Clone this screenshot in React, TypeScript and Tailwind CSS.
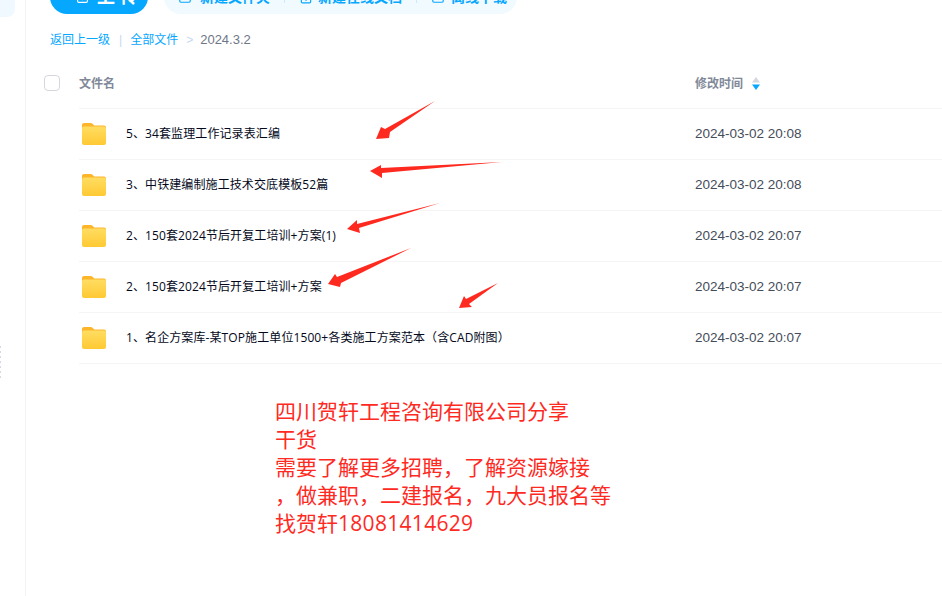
import { SquareArrowUp, SquarePlus, FilePlus, SquareArrowDown } from "lucide-react";

const files = [
  { name: "5、34套监理工作记录表汇编", time: "2024-03-02 20:08" },
  { name: "3、中铁建编制施工技术交底模板52篇", time: "2024-03-02 20:08" },
  { name: "2、150套2024节后开复工培训+方案(1)", time: "2024-03-02 20:07" },
  { name: "2、150套2024节后开复工培训+方案", time: "2024-03-02 20:07" },
  { name: "1、名企方案库-某TOP施工单位1500+各类施工方案范本（含CAD附图）", time: "2024-03-02 20:07" },
];

const arrows = [
  "435,101 390,132 389,138 376,139 381,127 385,129",
  "502,162 382,173 382,178 370,171 381,165 381,168",
  "440,203 359,228 360,233 347,229 357,220 357,224",
  "411,248 341,283 340,287 328,284 335,274 337,277",
  "498,283 469,304 472,307 459,308 464,296 466,299",
];

function FolderIcon() {
  return (
    <svg width="24" height="22" viewBox="0 0 24 22" className="shrink-0">
      <defs>
        <linearGradient id="folderBody" x1="0" y1="0" x2="0" y2="1">
          <stop offset="0" stopColor="#ffdd62" />
          <stop offset="1" stopColor="#ffc933" />
        </linearGradient>
      </defs>
      <path d="M2 0h6.500c1 0 1.600.4 2.200 1l1.500 1.500H22c1.100 0 2 .9 2 2V8H0V2C0 .9.900 0 2 0z" fill="#fdb52a" />
      <rect x="0" y="3.500" width="24" height="18.500" rx="2" fill="url(#folderBody)" />
    </svg>
  );
}

export default function App() {
  return (
    <div className="relative h-[596px] w-[942px] overflow-hidden bg-white font-['Liberation_Sans','Noto_Sans_CJK_SC',sans-serif]">
      <div className="flex h-full">
        {/* Sidebar */}
        <div className="flex w-[26px] shrink-0 flex-col justify-between border-r border-[#f2f3f5]">
          <div className="h-[17px] w-[15px] rounded-br-lg bg-[#f0f9ff]" />
        </div>
        <div className="absolute left-0 top-[346px] flex flex-col gap-[3px]">
          {[0, 1, 2, 3, 4, 5, 6].map((i) => (
            <div key={i} className="h-[2px] w-[1px] bg-[#d6d9e4]" />
          ))}
        </div>

        {/* Main */}
        <div className="min-w-0 flex-1">
          {/* Toolbar, scrolled partly out of view */}
          <div className="ml-6 -mt-5 flex items-center gap-4">
            <button className="flex h-[34px] w-[98px] items-center rounded-full bg-[#06a7ff] pl-[26px] text-[18px] font-bold tracking-[5px] text-white">
              <SquareArrowUp className="h-[13px] w-[13px]" />
              <span className="ml-[8px]">上传</span>
            </button>
            <div className="flex h-[34px] w-[353px] items-center rounded-[20px] bg-[#f0faff] pl-[14px] text-sm font-bold text-[#06a7ff]">
              <SquarePlus className="h-[14px] w-[14px]" />
              <span className="ml-2">新建文件夹</span>
              <div className="mx-[14px] h-3 w-px bg-[#cfe9fb]" />
              <FilePlus className="h-[14px] w-[14px]" />
              <span className="ml-[5px]">新建在线文档</span>
              <div className="mx-[14px] h-3 w-px bg-[#cfe9fb]" />
              <SquareArrowDown className="h-[14px] w-[14px]" />
              <span className="ml-[6px]">离线下载</span>
            </div>
          </div>

          {/* Breadcrumb */}
          <div className="ml-6 mt-[18px] flex h-4 items-center text-xs text-[#06a7ff]">
            <span>返回上一级</span>
            <span className="ml-[9px] mr-2 text-[#c4d8f4]">|</span>
            <span>全部文件</span>
            <span className="ml-2 mr-[7px] text-[#c4d8f4]">&gt;</span>
            <span className="text-[13px] text-[#6f7787]">2024.3.2</span>
          </div>

          {/* Table header */}
          <div className="ml-[18px] mt-[10px] flex h-[50px] items-center">
            <div className="h-4 w-4 rounded-[4px] border border-[#d4d7de]" />
            <div className="ml-[19px] mt-px w-[616px] text-xs font-bold text-[#818999]">文件名</div>
            <div className="mt-px flex items-center text-xs font-bold text-[#818999]">
              修改时间
              <svg width="8" height="13" viewBox="0 0 8 13" className="ml-[9px]">
                <path d="M4 0L8 5.500H0z" fill="#d4d7de" />
                <path d="M4 13L0 7.500h8z" fill="#06a7ff" />
              </svg>
            </div>
          </div>

          {/* Rows */}
          <div className="ml-[53px]">
            {files.map((f) => (
              <div key={f.name} className="flex h-[51px] items-center border-t border-[#f5f5f6] text-xs">
                <div className="ml-[3px]">
                  <FolderIcon />
                </div>
                <div className="ml-5 w-[569px] font-['Open_Sans','Noto_Sans_CJK_SC',sans-serif] tracking-[0.1px] text-[#03081a]">
                  {f.name}
                </div>
                <div className="text-[13.500px] text-[#454d5a]">{f.time}</div>
              </div>
            ))}
            <div className="border-t border-[#f5f5f6]" />
          </div>
        </div>
      </div>

      {/* Red annotations drawn over the screenshot */}
      <svg width="942" height="596" className="pointer-events-none absolute left-0 top-0">
        {arrows.map((p) => (
          <polygon key={p} points={p} fill="#ff2a1f" />
        ))}
      </svg>
      <div className="absolute left-[275px] top-[397px] font-['Open_Sans','Noto_Sans_CJK_SC',sans-serif] text-[21px] leading-[28px] text-[#ff2a1f]">
        <div>四川贺轩工程咨询有限公司分享</div>
        <div>干货</div>
        <div>需要了解更多招聘，了解资源嫁接</div>
        <div>，做兼职，二建报名，九大员报名等</div>
        <div>
          找贺轩<span className="tracking-[0.3px]">18081414629</span>
        </div>
      </div>
    </div>
  );
}
